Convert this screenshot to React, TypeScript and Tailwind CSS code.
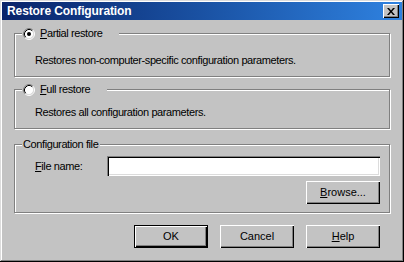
import React from 'react';

const font = { fontFamily: '"Liberation Sans", Arial, sans-serif' };

const Radio = ({ checked }: { checked?: boolean }) => (
  <svg width="12" height="12" viewBox="0 0 12 12" className="shrink-0">
    <circle cx="6" cy="6" r="4.5" fill="#fff" />
    <path d="M9.89 2.11A5.5 5.5 0 0 0 2.11 9.89" fill="none" stroke="#808080" strokeWidth="1" />
    <path d="M2.11 9.89A5.5 5.5 0 0 0 9.89 2.11" fill="none" stroke="#fff" strokeWidth="1" />
    <path d="M9.18 2.82A4.5 4.5 0 0 0 2.82 9.18" fill="none" stroke="#000" strokeWidth="1" />
    <path d="M2.82 9.18A4.5 4.5 0 0 0 9.18 2.82" fill="none" stroke="#dcdcdc" strokeWidth="1" />
    {checked && <circle cx="6" cy="6" r="2" fill="#000" />}
  </svg>
);

const CloseIcon = () => (
  <svg width="8" height="7" viewBox="0 0 8 7">
    <path d="M0 0h2l2 2.5L6 0h2L5 3.5 8 7H6L4 4.5 2 7H0l3-3.5z" fill="#000" />
  </svg>
);

const Key = ({ children }: { children: React.ReactNode }) => <span className="underline underline-offset-[1px]">{children}</span>;

interface ButtonProps {
  children: React.ReactNode;
  isDefault?: boolean;
}

const WinButton: React.FC<ButtonProps> = ({ children, isDefault }) => (
  <button
    className={
      isDefault
        ? 'w-[74px] h-[23px] bg-[#c3c3c3] text-black text-[11px] border border-black shadow-[inset_1px_1px_0_#fff,inset_-1px_-1px_0_#000,inset_-2px_-2px_0_#808080] flex items-center justify-center'
        : 'w-[74px] h-[23px] bg-[#c3c3c3] text-black text-[11px] shadow-[inset_1px_1px_0_#fff,inset_-1px_-1px_0_#000,inset_-2px_-2px_0_#808080] flex items-center justify-center'
    }
  >
    {children}
  </button>
);

const RadioGroup = ({ accel, rest, checked, desc, className }: { accel: string; rest: string; checked?: boolean; desc: string; className?: string }) => (
  <fieldset className={'border border-[#808080] shadow-[inset_1px_1px_0_#fff,1px_1px_0_#fff] pl-[7px] pb-[9px] ' + (className ?? '')}>
    <legend className="flex items-center h-[13px] pl-[1px] pr-[17px] bg-[#c3c3c3]">
      <Radio checked={checked} />
      <span className="ml-[5px] text-[11px] leading-[13px] tracking-[-0.4px]">
        <Key>{accel}</Key>
        {rest}
      </span>
    </legend>
    <div className={(checked ? 'mt-[14px]' : 'mt-[10px]') + ' ml-[13px] text-[11px] leading-[13px] tracking-[-0.4px]'}>{desc}</div>
  </fieldset>
);

export default function App() {
  return (
    <div className="w-[404px] h-[262px] bg-[#c3c3c3] p-[2px] shadow-[inset_-1px_-1px_0_#000,inset_1px_1px_0_#dcdcdc,inset_-2px_-2px_0_#808080,inset_2px_2px_0_#fff] text-black" style={font}>
      <div className="h-[18px] flex items-center justify-between pl-[5px] pr-[3px] bg-gradient-to-r from-[#0a246a] to-[#2f82e0]">
        <span className="text-white font-bold text-[12px] tracking-[-0.1px]">Restore Configuration</span>
        <div className="w-[16px] h-[14px] bg-[#c3c3c3] flex items-center justify-center shadow-[inset_1px_1px_0_#fff,inset_-1px_-1px_0_#000,inset_-2px_-2px_0_#808080]">
          <CloseIcon />
        </div>
      </div>
      <div className="px-[12px]">
        <RadioGroup accel="P" rest="artial restore" checked desc="Restores non-computer-specific configuration parameters." className="mt-[7px]" />
        <RadioGroup accel="F" rest="ull restore" desc="Restores all configuration parameters." className="mt-[6px]" />
        <fieldset className="mt-[9px] border border-[#808080] shadow-[inset_1px_1px_0_#fff,1px_1px_0_#fff] pl-[7px] pr-[9px] pb-[8px]">
          <legend className="h-[13px] pl-[1px] pr-[2px] text-[11px] leading-[13px] tracking-[-0.4px] bg-[#c3c3c3]">Configuration file</legend>
          <div className="flex items-center mt-[5px]">
            <label className="ml-[13px] w-[72px] text-[11px] tracking-[-0.4px]">
              <Key>F</Key>ile name:
            </label>
            <div className="flex-1 h-[20px] bg-white shadow-[inset_1px_1px_0_#808080,inset_2px_2px_0_#000,inset_-1px_-1px_0_#fff,inset_-2px_-2px_0_#dcdcdc]" />
          </div>
          <div className="flex justify-end mt-[5px]">
            <WinButton>
              <Key>B</Key>rowse...
            </WinButton>
          </div>
        </fieldset>
        <div className="flex justify-end gap-[12px] mt-[12px] pr-[10px]">
          <WinButton isDefault>OK</WinButton>
          <WinButton>Cancel</WinButton>
          <WinButton>
            <Key>H</Key>elp
          </WinButton>
        </div>
      </div>
    </div>
  );
}
